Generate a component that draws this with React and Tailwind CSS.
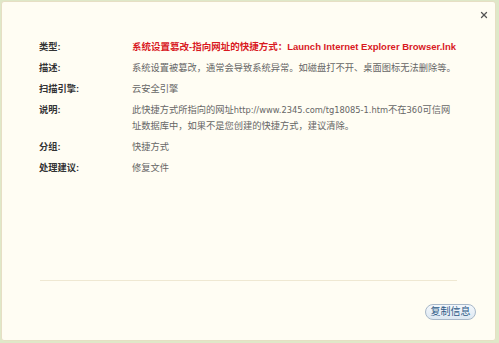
import { X } from 'lucide-react'

const Latin = ({ children }) => (
  <span className="font-['DejaVu_Sans',sans-serif] text-[8.3px]">{children}</span>
)

const rows = [
  { label: '描述:', value: '系统设置被篡改，通常会导致系统异常。如磁盘打不开、桌面图标无法删除等。' },
  { label: '扫描引擎:', value: '云安全引擎' },
  {
    label: '说明:',
    value: (
      <>
        此快捷方式所指向的网址<Latin>http://www.2345.com/tg18085-1.htm</Latin>不在<Latin>360</Latin>
        可信网址数据库中，如果不是您创建的快捷方式，建议清除。
      </>
    ),
  },
  { label: '分组:', value: '快捷方式' },
  { label: '处理建议:', value: '修复文件' },
]

export default function App() {
  return (
    <div className="w-[499px] h-[343px] bg-[#dfe8c8] pt-px pl-px pr-[3px] pb-[2px] font-['Liberation_Sans','Noto_Sans_CJK_SC',sans-serif]">
      <div className="h-full bg-[#fffdf3] border border-[#e6dfc4] rounded-[3px] flex flex-col relative">
        <button className="absolute right-[6px] top-[8px] text-[#555]">
          <X size={10} strokeWidth={3} />
        </button>

        <div className="pt-[37px] pl-[37px] pr-[30px] text-[9.25px] leading-[16px]">
          <div className="flex mb-[5px]">
            <div className="w-[93px] shrink-0 font-bold text-[#333]">类型:</div>
            <div className="font-bold text-[#d9191f] whitespace-nowrap text-[9.5px]">
              系统设置篡改-指向网址的快捷方式：Launch Internet Explorer Browser.lnk
            </div>
          </div>
          {rows.map((r) => (
            <div key={r.label} className="flex mb-[5px]">
              <div className="w-[93px] shrink-0 font-bold text-[#333]">{r.label}</div>
              <div className="text-[#666] w-[325px]">{r.value}</div>
            </div>
          ))}
        </div>

        <div className="mt-auto mx-[38px] border-t border-[#efe8d2]" />
        <div className="flex justify-end pr-[19px] pt-[23px] pb-[20px]">
          <button className="h-[16px] w-[51px] rounded-full border border-[#a8b8c8] bg-gradient-to-b from-[#f4f8fc] to-[#dde8f2] text-[10px] leading-[14px] text-[#2d5a86]">
            复制信息
          </button>
        </div>
      </div>
    </div>
  )
}
